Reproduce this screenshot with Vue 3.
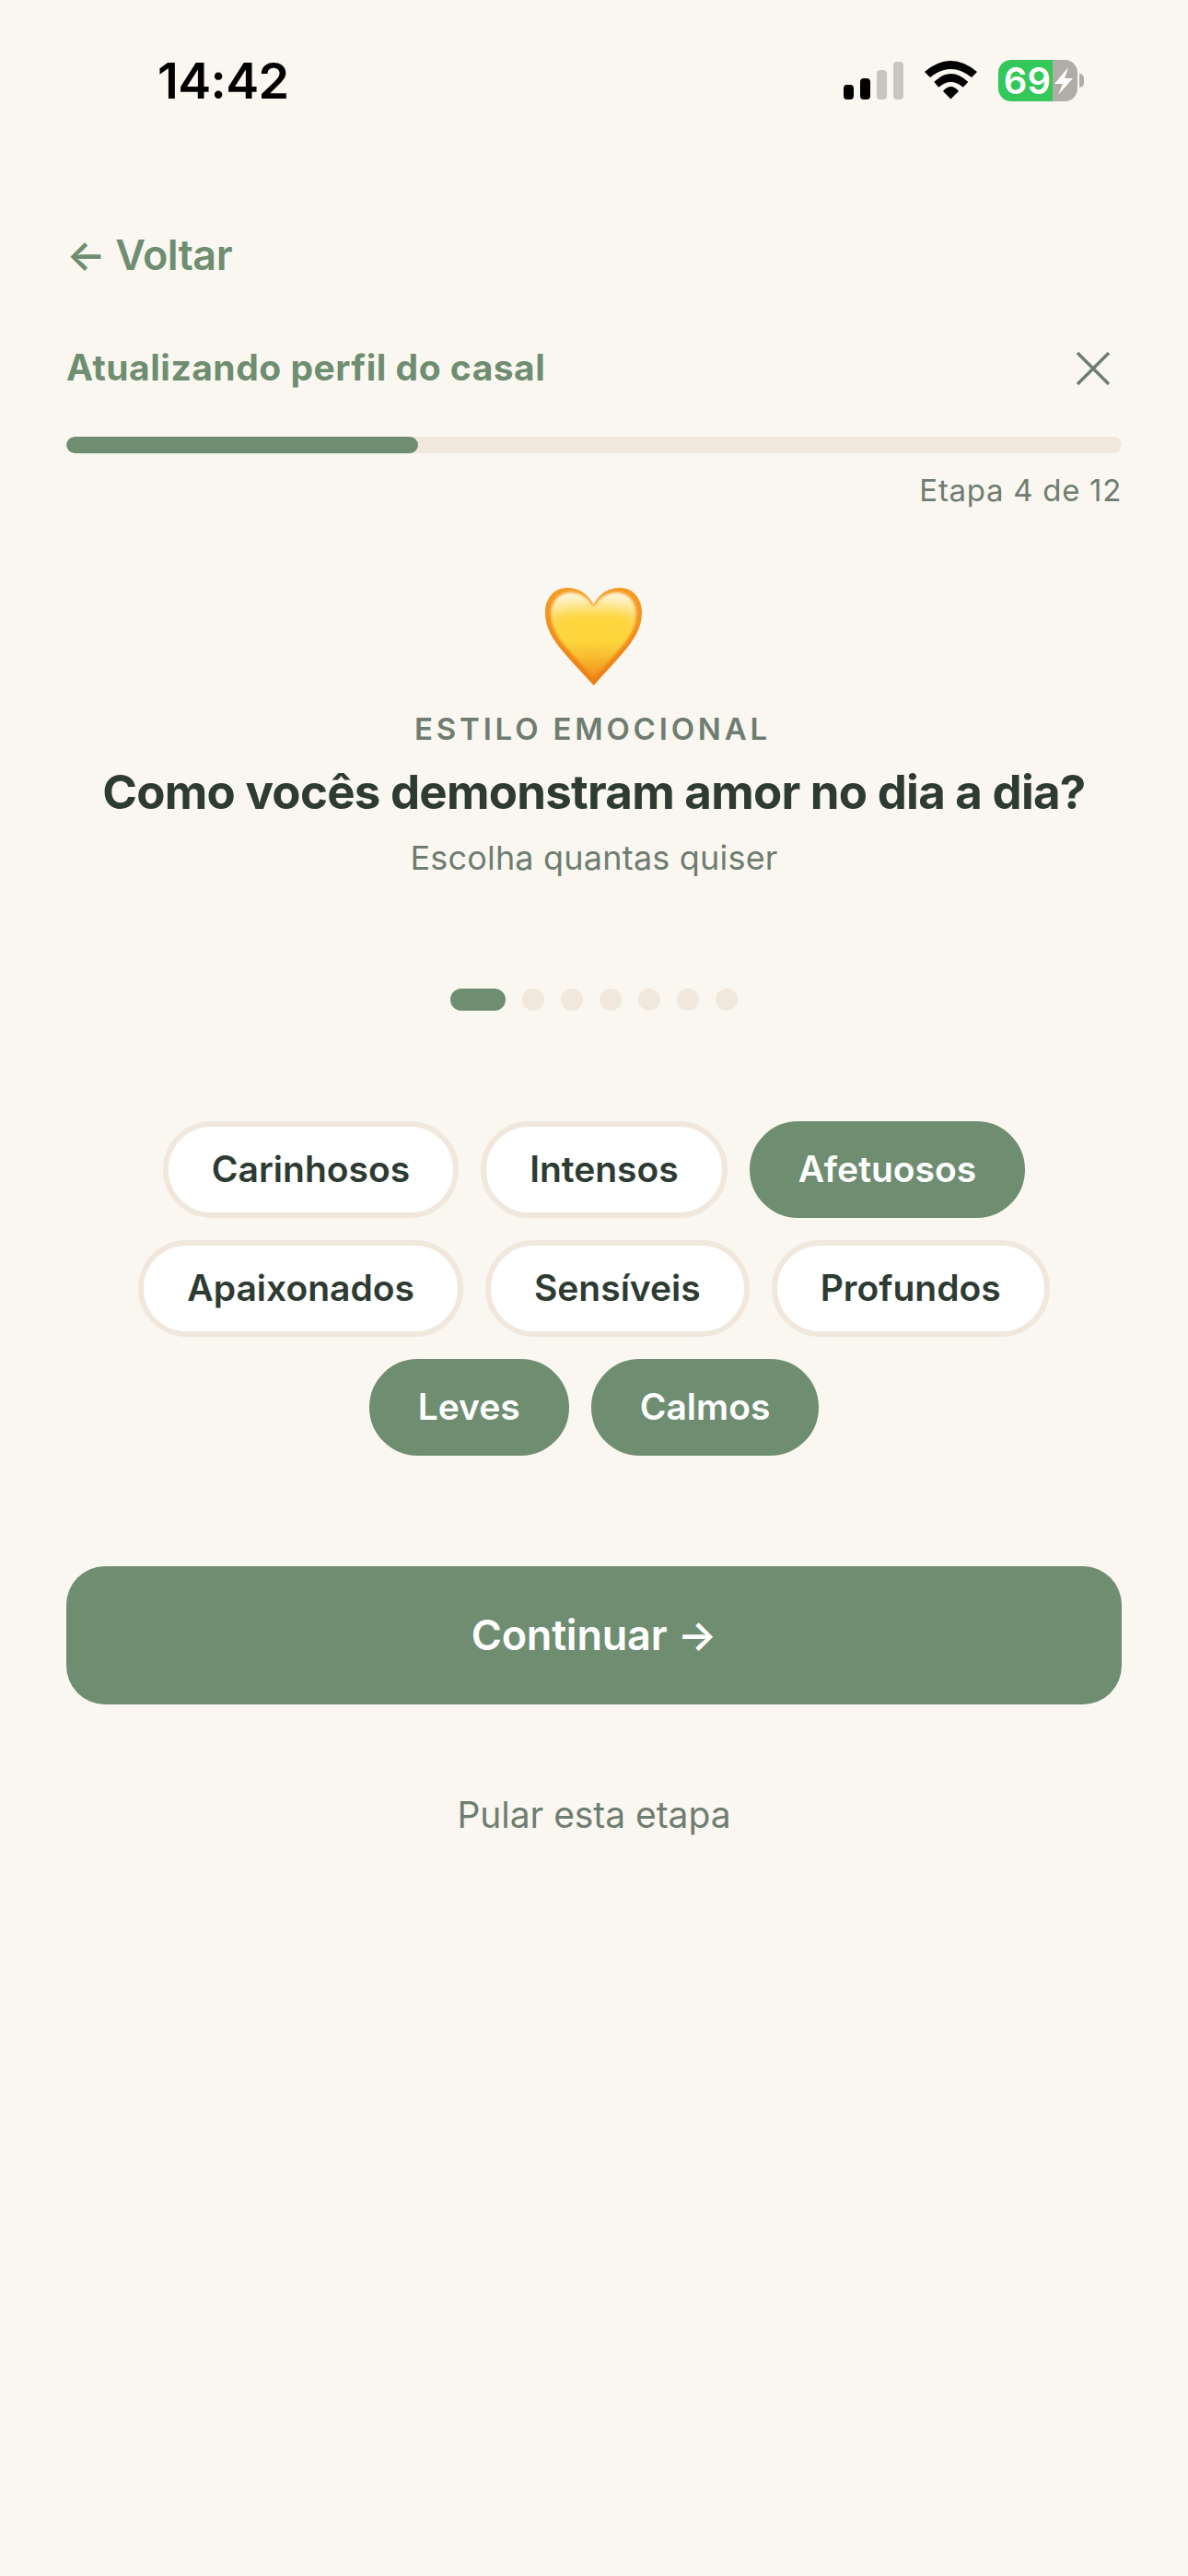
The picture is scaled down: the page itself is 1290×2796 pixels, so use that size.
<script setup>
const chips = [
  { label: 'Carinhosos', on: false },
  { label: 'Intensos', on: false },
  { label: 'Afetuosos', on: true },
  { label: 'Apaixonados', on: false },
  { label: 'Sensíveis', on: false },
  { label: 'Profundos', on: false },
  { label: 'Leves', on: true },
  { label: 'Calmos', on: true }
]
const dots = [1, 2, 3, 4, 5, 6]
const heart = 'M52.7 18C46 6 36 0 24 0C10 0 0 11 0 27C0 42 7 55 20 70C30 82 42 94 52.7 106C63 94 75 82 85 70C98 55 105 42 105 27C105 11 95 0 81 0C69 0 59 6 52.7 18Z'
</script>

<template>
  <div class="page">
    <header class="status">
      <span class="time">14:42</span>
      <div class="status-icons">
        <div class="signal">
          <i class="bar b1"></i><i class="bar b2"></i><i class="bar b3 off"></i><i class="bar b4 off"></i>
        </div>
        <svg class="wifi" width="57" height="42" viewBox="0 0 57 42">
          <path d="M0 12Q28.5 -12 57 12L51 18Q28.5 0 6 18Z" />
          <path d="M10.3 23Q28.5 5 47.3 23L41.7 28.7Q28.5 17.3 15.3 28.7Z" />
          <path d="M20 33Q28.5 23 37 33L28.4 41.5Z" />
        </svg>
        <div class="battery">
          <div class="bat-body">
            <span class="bat-level">69</span>
            <span class="bat-rest">
              <svg width="20" height="30" viewBox="0 0 20 30"><path d="M15 0L0 18H9L4 30L20 12H11Z" fill="#fff" /></svg>
            </span>
          </div>
          <i class="bat-tip"></i>
        </div>
      </div>
    </header>

    <main class="content">
      <div class="back">← Voltar</div>

      <div class="head">
        <span class="head-title">Atualizando perfil do casal</span>
        <svg class="close" width="36" height="36" viewBox="0 0 36 36">
          <path d="M1 1L35 35M35 1L1 35" stroke="#6d7d70" stroke-width="3.4" fill="none" />
        </svg>
      </div>

      <div class="track"><div class="fill" :style="{ width: '33.33%' }"></div></div>
      <div class="step">Etapa 4 de 12</div>

      <svg class="heart" width="106" height="107" viewBox="0 0 106 107">
        <defs>
          <radialGradient id="hy" cx="50%" cy="58%" r="62%">
            <stop offset="0%" stop-color="#fdd438" />
            <stop offset="70%" stop-color="#fdd63f" />
            <stop offset="100%" stop-color="#fcdc6c" />
          </radialGradient>
          <linearGradient id="ho" x1="0" y1="0" x2="0" y2="1">
            <stop offset="0%" stop-color="#f59c25" />
            <stop offset="100%" stop-color="#ea7f14" />
          </linearGradient>
          <linearGradient id="hw" x1="0" y1="0" x2="0" y2="1">
            <stop offset="0%" stop-color="#fff" stop-opacity=".8" />
            <stop offset="30%" stop-color="#fff" stop-opacity="0" />
          </linearGradient>
          <linearGradient id="hb" x1="0" y1="0" x2="0" y2="1">
            <stop offset="58%" stop-color="#f39a22" stop-opacity="0" />
            <stop offset="100%" stop-color="#f08a1a" stop-opacity=".95" />
          </linearGradient>
          <filter id="hs" x="-10%" y="-10%" width="120%" height="120%">
            <feGaussianBlur stdDeviation="1.4" />
          </filter>
        </defs>
        <path :d="heart" fill="url(#ho)" />
        <g filter="url(#hs)">
          <path :d="heart" transform="translate(6.4 5.2) scale(.88 .87)" fill="url(#hy)" />
          <path :d="heart" transform="translate(6.4 5.2) scale(.88 .87)" fill="url(#hw)" />
          <path :d="heart" transform="translate(6.4 5.2) scale(.88 .87)" fill="url(#hb)" />
        </g>
      </svg>

      <div class="eyebrow">ESTILO EMOCIONAL</div>
      <h1 class="title">Como vocês demonstram amor no dia a dia?</h1>
      <p class="sub">Escolha quantas quiser</p>

      <div class="dots">
        <i class="pill"></i>
        <i v-for="d in dots" :key="d" class="dot"></i>
      </div>

      <div class="chips">
        <div v-for="c in chips" :key="c.label" class="chip" :class="{ on: c.on }">{{ c.label }}</div>
      </div>

      <div class="cta">Continuar →</div>
      <div class="skip">Pular esta etapa</div>
    </main>
  </div>
</template>

<style>
html, body { margin: 0; background: #faf7f0; }
</style>

<style scoped>
.page {
  width: 1290px;
  min-height: 2796px;
  background: #faf7f0;
  font-family: Inter, "Noto Sans", sans-serif;
  box-sizing: border-box;
}
.status {
  height: 176px;
  display: flex;
  align-items: center;
  justify-content: space-between;
  padding: 0 113px 0 171px;
}
.time {
  font-size: 54px;
  font-weight: 600;
  color: #000;
  line-height: 60px;
  letter-spacing: -0.6px;
}
.status-icons {
  display: flex;
  align-items: flex-end;
  height: 45px;
  margin-top: -1px;
}
.signal {
  display: flex;
  align-items: flex-end;
  gap: 7px;
  margin-right: 23px;
  margin-bottom: 2px;
}
.bar { display: block; width: 11px; border-radius: 4px; background: #000; }
.bar.off { background: #c9c6c0; }
.b1 { height: 16px; }
.b2 { height: 23px; }
.b3 { height: 32px; }
.b4 { height: 41px; }
.wifi { fill: #000; margin-right: 23px; margin-bottom: 2px; display: block; }
.battery { display: flex; align-items: center; }
.bat-body {
  width: 86px;
  height: 45px;
  display: flex;
}
.bat-level {
  width: 59px;
  background: #34c759;
  border-radius: 14px 0 0 14px;
  color: #fff;
  font-size: 40px;
  font-weight: 600;
  line-height: 45px;
  text-align: right;
  padding-right: 2px;
  box-sizing: border-box;
}
.bat-rest {
  flex: 1;
  background: #b0ada7;
  border-radius: 0 14px 14px 0;
  display: flex;
  align-items: center;
  padding-left: 2px;
}
.bat-tip {
  display: block;
  width: 5px;
  height: 15px;
  margin-left: 2px;
  background: #b0ada7;
  border-radius: 0 8px 8px 0;
}
.content {
  padding: 0 72px;
  display: flex;
  flex-direction: column;
}
.back {
  margin-top: 77px;
  height: 48px;
  line-height: 48px;
  font-size: 45px;
  font-weight: 600;
  letter-spacing: -0.5px;
  color: #6f8e71;
}
.head {
  margin-top: 75px;
  height: 48px;
  display: flex;
  align-items: center;
  justify-content: space-between;
}
.head-title {
  font-size: 39px;
  font-weight: 700;
  letter-spacing: 0.5px;
  margin-top: -3px;
  color: #6f8e71;
}
.close { margin-right: 13px; display: block; }
.track {
  margin-top: 50px;
  height: 18px;
  border-radius: 9px;
  background: #f0e8dc;
  overflow: hidden;
}
.fill { height: 100%; border-radius: 9px; background: #6f8e71; }
.step {
  margin-top: 18px;
  height: 44px;
  line-height: 44px;
  text-align: right;
  font-size: 33px;
  letter-spacing: 0.7px;
  color: #6f7d71;
}
.heart { display: block; margin: 84px auto 0; }
.eyebrow {
  margin-top: 26px;
  height: 40px;
  line-height: 40px;
  text-align: center;
  font-size: 33px;
  font-weight: 600;
  letter-spacing: 3.8px;
  padding-right: 3px;
  color: #6f7d71;
}
.title {
  margin: 19px 0 0;
  height: 60px;
  line-height: 60px;
  text-align: center;
  font-size: 51px;
  font-weight: 700;
  letter-spacing: -0.75px;
  color: #2d3b32;
  white-space: nowrap;
}
.sub {
  margin: 19px 0 0;
  height: 44px;
  line-height: 44px;
  text-align: center;
  font-size: 36px;
  letter-spacing: 0.2px;
  color: #6f7d71;
}
.dots {
  margin-top: 120px;
  display: flex;
  justify-content: center;
  gap: 18px;
}
.pill { display: block; width: 60px; height: 24px; border-radius: 12px; background: #6f8e71; }
.dot { display: block; width: 24px; height: 24px; border-radius: 50%; background: #f0e8dc; }
.chips {
  margin-top: 120px;
  display: flex;
  flex-wrap: wrap;
  justify-content: center;
  gap: 24px;
}
.chip {
  height: 105px;
  box-sizing: border-box;
  padding: 0 47px;
  border: 6px solid #f0e8dc;
  border-radius: 53px;
  background: #fff;
  color: #2d3b32;
  font-size: 39px;
  font-weight: 600;
  line-height: 91px;
}
.chip.on {
  background: #6f8e71;
  border-color: #6f8e71;
  color: #fff;
}
.cta {
  margin-top: 120px;
  height: 150px;
  line-height: 150px;
  border-radius: 42px;
  background: #6f8e71;
  color: #fff;
  text-align: center;
  font-size: 45px;
  font-weight: 600;
  letter-spacing: -0.2px;
}
.skip {
  margin-top: 95px;
  height: 50px;
  line-height: 50px;
  text-align: center;
  font-size: 39px;
  letter-spacing: -0.05px;
  color: #6f7d71;
}
</style>
